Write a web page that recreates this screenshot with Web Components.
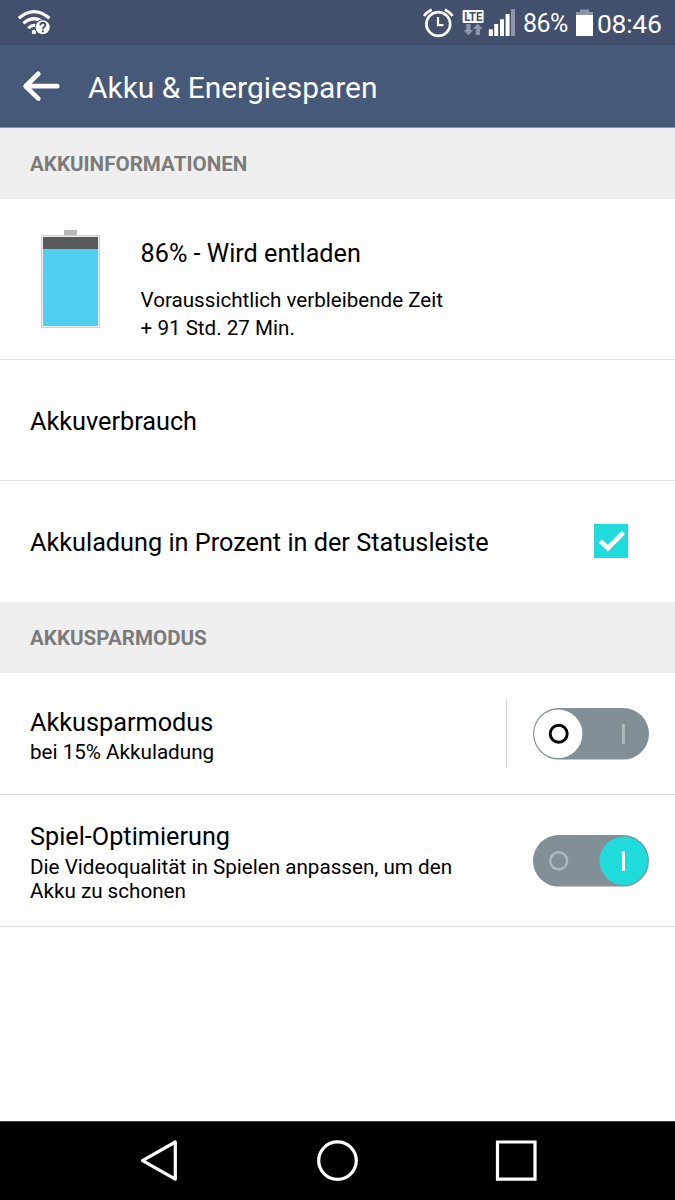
<!DOCTYPE html>
<html lang="de">
<head>
<meta charset="utf-8">
<title>Akku &amp; Energiesparen</title>
<style>
  body {
    margin: 0;
    background: #fefefe;
    font-family: Roboto, "Liberation Sans", sans-serif;
    color: #000;
  }
</style>
</head>
<body>
<settings-screen>
  <status-bar slot="top" percent="86%" time="08:46"></status-bar>
  <title-bar slot="top">Akku &amp; Energiesparen</title-bar>

  <section-header>AKKUINFORMATIONEN</section-header>
  <battery-info level="86">
    86% - Wird entladen
    <span slot="first">Voraussichtlich verbleibende Zeit</span>
    <span slot="second">+ 91 Std. 27 Min.</span>
  </battery-info>
  <setting-row style="--height: 121px; --top: 47px">Akkuverbrauch</setting-row>
  <setting-row style="--height: 121px; --top: 47px; --line: transparent">
    Akkuladung in Prozent in der Statusleiste
    <check-box slot="control"></check-box>
  </setting-row>

  <section-header>AKKUSPARMODUS</section-header>
  <setting-row divided style="--height: 122px; --top: 35px; --gap: 2px">
    Akkusparmodus
    <span slot="summary">bei 15% Akkuladung</span>
    <toggle-switch slot="control"></toggle-switch>
  </setting-row>
  <setting-row style="--height: 132px; --top: 27px">
    Spiel-Optimierung
    <span slot="summary">Die Videoqualität in Spielen anpassen, um den<br>Akku zu schonen</span>
    <toggle-switch slot="control" on></toggle-switch>
  </setting-row>

  <nav-bar slot="bottom"></nav-bar>
</settings-screen>

<script>
class SettingsScreen extends HTMLElement {
  connectedCallback() {
    this.attachShadow({ mode: 'open' });
    this.shadowRoot.innerHTML = `
      <style>
        :host {
          display: flex;
          flex-direction: column;
          width: 675px;
          height: 1200px;
          overflow: hidden;
        }
        main {
          flex: 1;
          min-height: 0;
        }
      </style>
      <slot name="top"></slot>
      <main><slot></slot></main>
      <slot name="bottom"></slot>
    `;
  }
}

class StatusBar extends HTMLElement {
  connectedCallback() {
    this.attachShadow({ mode: 'open' });
    this.shadowRoot.innerHTML = `
      <style>
        :host {
          display: flex;
          justify-content: space-between;
          height: 45px;
          background: #424f6d;
          color: #fff;
        }
        svg {
          display: block;
          flex: none;
        }
        .right {
          display: flex;
          width: 256px;
        }
        .percent, .time {
          line-height: 30px;
          padding-top: 9px;
          white-space: nowrap;
        }
        .percent {
          width: 53px;
          font-size: 25px;
          letter-spacing: -0.6px;
        }
        .time {
          font-size: 26.5px;
          letter-spacing: -0.3px;
        }
        text {
          font: bold 12px Roboto, sans-serif;
        }
      </style>
      <svg width="60" height="45" viewBox="0 0 60 45" fill="none" stroke="#fff">
        <path d="M18.8 18.2Q34 5 49.4 18.2" stroke-width="3.2"/>
        <path d="M23.4 23.4Q34 14.2 44.6 23.2" stroke-width="3.2"/>
        <path d="M28.2 28.2Q32.5 24.2 37 25.6" stroke-width="3"/>
        <circle cx="34" cy="32" r="2.3" fill="#fff" stroke="none"/>
        <circle cx="42.7" cy="27.2" r="8" fill="#424f6d" stroke="none"/>
        <circle cx="42.7" cy="27.2" r="7" fill="#fff" stroke="none"/>
        <path d="M40.2 25.4C40.4 21.8 45.4 22 45.4 25C45.4 27 42.8 26.8 42.8 29.2M42.8 30.2V32.2" stroke="#424f6d" stroke-width="1.9"/>
      </svg>
      <div class="right">
        <svg width="104" height="45" viewBox="419 0 104 45">
          <g fill="none" stroke="#fff">
            <circle cx="438.3" cy="24" r="11.9" stroke-width="2.7"/>
            <path d="M438 17V25.2H443.5" stroke-width="2.2"/>
            <path d="M424 16Q427 11.6 431.8 9.8M452.6 16Q449.6 11.6 444.8 9.8" stroke-width="2.6"/>
          </g>
          <rect x="462.6" y="10" width="21" height="13" rx="1" fill="#fff"/>
          <text x="464.2" y="20.8" textLength="18" lengthAdjust="spacingAndGlyphs" fill="#424f6d">LTE</text>
          <path d="M466.3 24H470.5V30H473.6L468.4 35.2L463.4 30H466.3ZM475.8 35V29H472.8L477.8 23.6L482.8 29H480V35Z" fill="#8d95a8"/>
          <path d="M488.8 29.3H492.8V36H488.8ZM494.2 24H498.2V36H494.2ZM500 19.2H504V36H500ZM505.6 14H509.6V36H505.6Z" fill="#fff"/>
          <path d="M511 9H515V36H511Z" fill="#8d95a8"/>
        </svg>
        <div class="percent">${this.getAttribute('percent')}</div>
        <svg width="21" height="45" viewBox="576 0 21 45">
          <path d="M576 12H580V9.6H589V12H593V16H576Z" fill="#8d95a8"/>
          <path d="M576 15H593V36H576Z" fill="#fff"/>
        </svg>
        <div class="time">${this.getAttribute('time')}</div>
      </div>
    `;
  }
}

class TitleBar extends HTMLElement {
  connectedCallback() {
    this.attachShadow({ mode: 'open' });
    this.shadowRoot.innerHTML = `
      <style>
        :host {
          display: flex;
          box-sizing: border-box;
          height: 83px;
          background: #465979;
          border-bottom: 1px solid #8c97b0;
          color: #fff;
        }
        svg {
          display: block;
          width: 88px;
          height: 82px;
        }
        .title {
          padding-top: 25px;
          font-size: 29.9px;
          line-height: 36px;
          white-space: nowrap;
        }
      </style>
      <svg viewBox="0 0 88 82" fill="none" stroke="#fff" stroke-width="4.7" stroke-linecap="round" stroke-linejoin="round">
        <path d="M57.3 41.2H26M38.3 28.8L25.6 41.2L38.3 53.6"/>
      </svg>
      <div class="title"><slot></slot></div>
    `;
  }
}

class SectionHeader extends HTMLElement {
  connectedCallback() {
    this.attachShadow({ mode: 'open' });
    this.shadowRoot.innerHTML = `
      <style>
        :host {
          display: block;
          box-sizing: border-box;
          height: 71px;
          padding: 24px 30px 0;
          background: #efefef;
          color: #7b7b7b;
          font-size: 20.6px;
          font-weight: 700;
          line-height: 24px;
        }
      </style>
      <slot></slot>
    `;
  }
}

class BatteryInfo extends HTMLElement {
  connectedCallback() {
    const level = Number(this.getAttribute('level'));
    this.attachShadow({ mode: 'open' });
    this.shadowRoot.innerHTML = `
      <style>
        :host {
          display: flex;
          box-sizing: border-box;
          height: 161px;
          border-bottom: 1px solid #e0e0e0;
        }
        .battery {
          display: flex;
          flex-direction: column;
          align-items: center;
          width: 59px;
          padding: 31px 40.6px 0 41px;
        }
        .cap {
          width: 13px;
          height: 5px;
          background: #b9b9b9;
        }
        .cell {
          box-sizing: border-box;
          width: 59px;
          height: 93px;
          padding: 1px;
          border: 1px solid #cfcfcf;
          border-radius: 1px;
          background: #ececec;
        }
        .charge {
          height: 100%;
          background: linear-gradient(#58595b ${100 - level}%, #4fcff1 0);
        }
        .text {
          padding-top: 40px;
          white-space: nowrap;
        }
        .state {
          font-size: 25.2px;
          line-height: 30px;
          margin-bottom: 18px;
        }
        .detail {
          font-size: 20.6px;
          line-height: 27.6px;
        }
      </style>
      <div class="battery">
        <div class="cap"></div>
        <div class="cell"><div class="charge"></div></div>
      </div>
      <div class="text">
        <div class="state"><slot></slot></div>
        <div class="detail"><slot name="first"></slot></div>
        <div class="detail"><slot name="second"></slot></div>
      </div>
    `;
  }
}

class SettingRow extends HTMLElement {
  connectedCallback() {
    this.attachShadow({ mode: 'open' });
    this.shadowRoot.innerHTML = `
      <style>
        :host {
          display: flex;
          box-sizing: border-box;
          height: var(--height);
          padding-left: 30px;
          border-bottom: 1px solid var(--line, #e0e0e0);
        }
        .text {
          flex: 1;
          padding-top: var(--top);
          white-space: nowrap;
        }
        .title {
          font-size: 25.25px;
          line-height: 30px;
          margin-bottom: var(--gap, 3px);
        }
        .summary {
          font-size: 20.65px;
          line-height: 24.4px;
        }
        .control {
          display: flex;
          align-items: center;
        }
        :host([divided]) .control::before {
          content: "";
          width: 1px;
          height: 68px;
          margin-right: 26px;
          background: #d4d4d4;
        }
      </style>
      <div class="text">
        <div class="title"><slot></slot></div>
        <div class="summary"><slot name="summary"></slot></div>
      </div>
      <div class="control"><slot name="control"></slot></div>
    `;
  }
}

class CheckBox extends HTMLElement {
  connectedCallback() {
    this.attachShadow({ mode: 'open' });
    this.shadowRoot.innerHTML = `
      <style>
        :host {
          display: block;
          width: 34px;
          height: 34px;
          margin-right: 47px;
          background: #20dbdb;
        }
        svg {
          display: block;
        }
      </style>
      <svg width="34" height="34" viewBox="0 0 34 34" fill="none" stroke="#fff" stroke-width="4.6">
        <path d="M6.2 16.8L13.8 24.2L29.4 8.6"/>
      </svg>
    `;
  }
}

class ToggleSwitch extends HTMLElement {
  connectedCallback() {
    const on = this.hasAttribute('on');
    this.attachShadow({ mode: 'open' });
    this.shadowRoot.innerHTML = `
      <style>
        :host {
          display: block;
          margin-right: 26px;
        }
        svg {
          display: block;
        }
      </style>
      <svg width="116" height="52" viewBox="0 0 116 52" fill="none">
        <rect width="116" height="51.6" rx="25.8" fill="#828f96"/>
        <circle cx="${on ? 90.7 : 25.3}" cy="25.8" r="24.2" fill="${on ? '#20dbdb' : '#fff'}"/>
        <circle cx="25.7" cy="25.8" r="8.5" stroke="${on ? '#b0b8bc' : '#000'}" stroke-width="${on ? 2.4 : 2.9}"/>
        <path d="M90.4 16V36" stroke="${on ? '#fff' : '#b0b8bc'}" stroke-width="3"/>
      </svg>
    `;
  }
}

class NavBar extends HTMLElement {
  connectedCallback() {
    this.attachShadow({ mode: 'open' });
    this.shadowRoot.innerHTML = `
      <style>
        :host {
          display: flex;
          justify-content: space-between;
          box-sizing: border-box;
          height: 79px;
          padding: 16px 136px 0 138px;
          border-top: 1px solid #3a3a3a;
          background: #000;
        }
        svg {
          display: block;
        }
      </style>
      <svg width="44" height="46" viewBox="0 0 44 46" fill="none" stroke="#fff" stroke-width="3.2" stroke-linejoin="round">
        <path d="M37.3 4V41.2L4.5 22.6Z"/>
      </svg>
      <svg width="44" height="46" viewBox="0 0 44 46" fill="none" stroke="#fff" stroke-width="3.2">
        <circle cx="20.5" cy="22.6" r="18.8"/>
      </svg>
      <svg width="44" height="46" viewBox="0 0 44 46" fill="none" stroke="#fff" stroke-width="3.2">
        <path d="M2.5 4H40V41.2H2.5Z"/>
      </svg>
    `;
  }
}

customElements.define('settings-screen', SettingsScreen);
customElements.define('status-bar', StatusBar);
customElements.define('title-bar', TitleBar);
customElements.define('section-header', SectionHeader);
customElements.define('battery-info', BatteryInfo);
customElements.define('setting-row', SettingRow);
customElements.define('check-box', CheckBox);
customElements.define('toggle-switch', ToggleSwitch);
customElements.define('nav-bar', NavBar);
</script>
</body>
</html>
